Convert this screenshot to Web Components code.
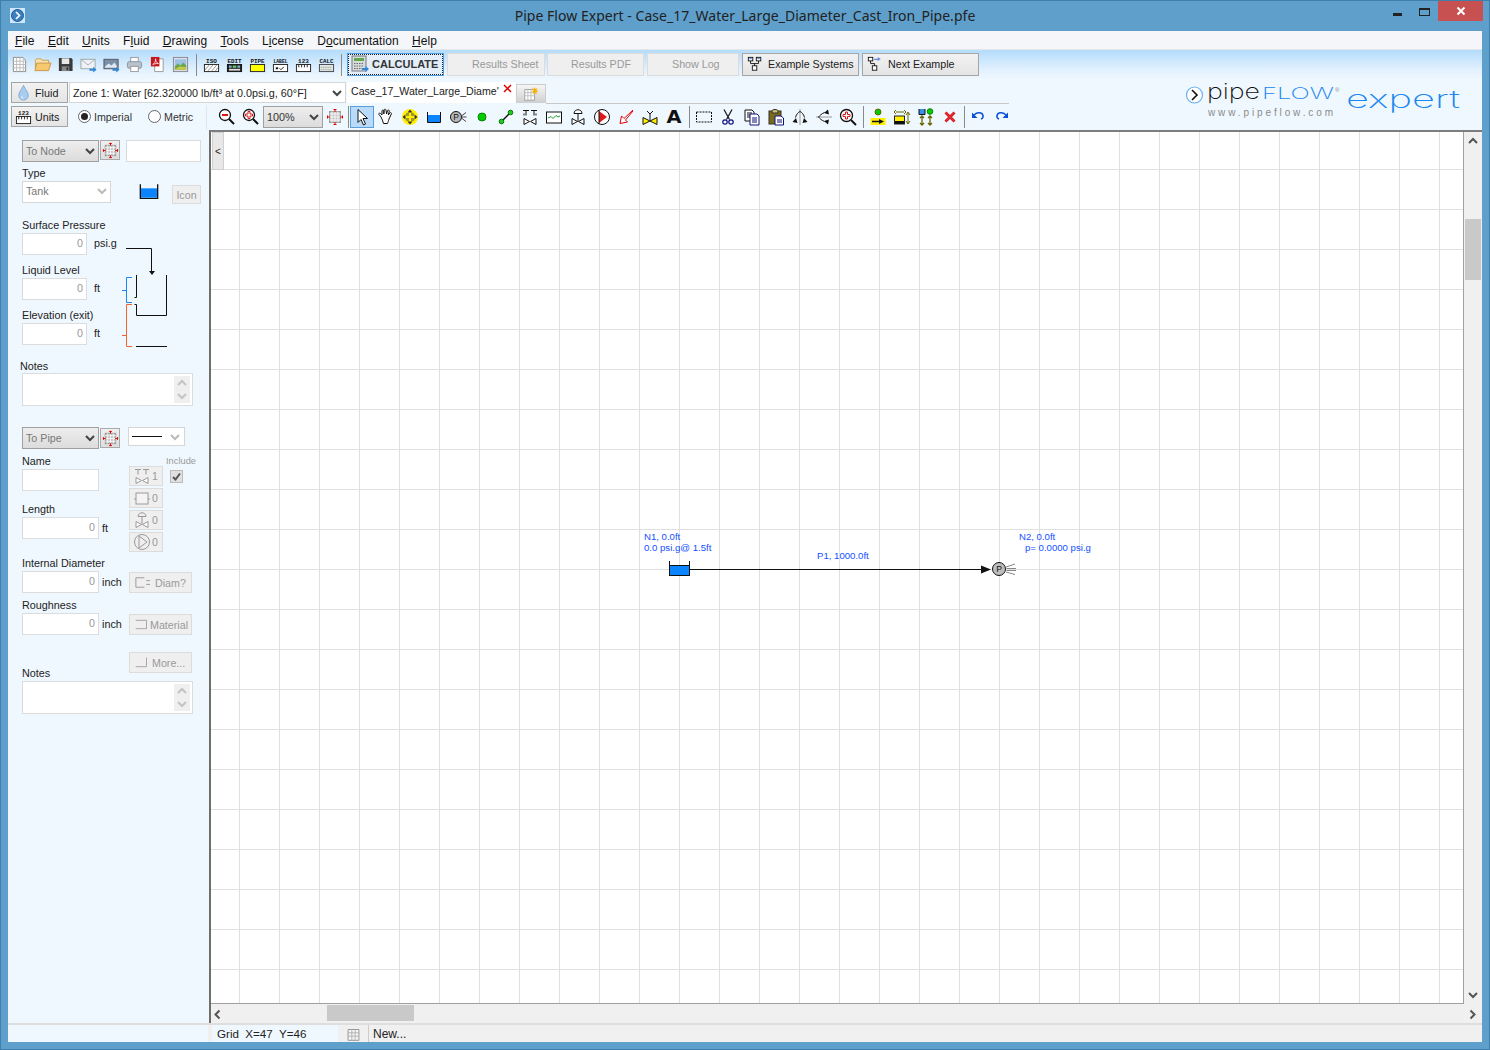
<!DOCTYPE html>
<html lang="en"><head><meta charset="utf-8"><title>Pipe Flow Expert</title>
<style>
html,body{margin:0;padding:0;background:#5f9fcb;font-family:"Liberation Sans",Arial,sans-serif;font-size:11px;color:#222}
</style></head><body>
<pf-app></pf-app>
<script>
const bow=(c)=>`<path d="M3 10.5l5.5 3-5.5 3zM15 10.5l-5.5 3 5.5 3z" fill="#fff" stroke="${c}"/>`;
const txt=(t)=>`<text x="9" y="7" text-anchor="middle" font-family="Liberation Mono,monospace" font-size="6.500" font-weight="700" fill="#111" textLength="${Math.min(15,t.length*3.8)}" lengthAdjust="spacingAndGlyphs">${t}</text>`;
const I={
new:`<path d="M2.5 1.5h10l3 3v12h-13z" fill="#fff" stroke="#888"/><path d="M2.5 5.5h13M2.5 9h13M2.5 12.5h13M6 1.5v15M9.5 1.5v15M13 1.5v15" stroke="#bbb" fill="none"/>`,
open:`<path d="M1.5 14V4.5l1-1.5h5l1 1.5h7v3" fill="#f9e2ad" stroke="#c9a05a"/><path d="M1 15.5l2-8h15l-2.5 8z" fill="#f6c970" stroke="#c9964a"/>`,
save:`<path d="M2 2h13l1.5 1.5V16H2z" fill="#3a3a3a"/><rect x="5" y="2.5" width="8" height="6" fill="#e8e8e8"/><rect x="5" y="11" width="8" height="5" fill="#8a8a8a"/><rect x="10" y="12" width="2" height="3" fill="#333"/>`,
email:`<rect x="1" y="3.5" width="15" height="10" fill="#eef2f6" stroke="#9aa"/><path d="M1 3.5l7.5 6 7.5-6" fill="none" stroke="#aab"/><path d="M10 13.500h4v-2l3.500 3-3.500 3v-2h-4z" fill="#2f87d8"/>`,
emailimg:`<rect x="1" y="3.5" width="15" height="10" fill="#7a8ea6" stroke="#556"/><path d="M2 11l4-3 3 2 3-3 3 4v1.5H2z" fill="#dde8f4"/><path d="M10 13.500h4v-2l3.500 3-3.500 3v-2h-4z" fill="#2f87d8"/>`,
print:`<rect x="5" y="1.5" width="8" height="5" fill="#fff" stroke="#999"/><rect x="1.5" y="6" width="15" height="7" rx="2" fill="#b8c2cc" stroke="#8a949e"/><rect x="5" y="11" width="8" height="5.5" fill="#fff" stroke="#999"/>`,
pdf:`<path d="M6 3h9v13.5H6z" fill="#fff" stroke="#999"/><rect x="2" y="1" width="9" height="10" fill="#c8161d"/><path d="M4 9c2-1 3-3 3-6 0 3 1 4 3 5-2 0-4 0-6 1z" fill="none" stroke="#fff" stroke-width=".8"/>`,
image:`<rect x="1.5" y="1.5" width="15" height="15" fill="#dde" stroke="#888"/><rect x="3" y="3.5" width="12" height="11" fill="#9cc2e6"/><path d="M3 11l3-3 3 2 3-3 3 3v4.500H3z" fill="#6aa84f"/><path d="M3 14l5-3 7 1v2.500H3z" fill="#c9c94a"/>`,
iso:`${txt('ISO')}<rect x="1.5" y="9" width="15" height="7.500" fill="#fff" stroke="#222"/><path d="M2 15l5-6M5 16l6-7M9 16l6-7M13 16l3-4" stroke="#777" stroke-width=".8"/>`,
edit:`${txt('EDIT')}<rect x="1.5" y="9" width="15" height="7.500" fill="#111" stroke="#111"/><rect x="3" y="10" width="3" height="2.500" fill="#8ac"/><rect x="7" y="10" width="4" height="2.500" fill="#6c6"/><rect x="12" y="10" width="3" height="2.500" fill="#8ac"/><rect x="3" y="13.500" width="12" height="2" fill="#ddd"/>`,
pipe:`${txt('PIPE')}<rect x="1.500" y="9" width="15" height="7.500" fill="#ffff00" stroke="#222"/>`,
labelic:`${txt('LABEL')}<rect x="1.500" y="9" width="15" height="7.500" fill="#fff" stroke="#222"/><path d="M8 13l1.500 1.500 3-3" fill="none" stroke="#111"/><rect x="4" y="12" width="2.500" height="2" fill="#111"/>`,
n123:`${txt('123')}<rect x="1.500" y="9" width="15" height="7.500" fill="#fff" stroke="#222"/><path d="M4 9v3M7 9v3M10 9v3M13 9v3" stroke="#222"/>`,
calc:`${txt('CALC')}<rect x="1.500" y="9" width="15" height="7.500" fill="#dfe9df" stroke="#445"/><path d="M3 12h12M3 14.500h12" stroke="#888" stroke-dasharray="1 1"/>`,
calculate:`<rect x="1" y="1" width="14" height="15" fill="#d8dcd8" stroke="#778"/><rect x="3" y="3" width="10" height="3" fill="#5fa84f"/><path d="M3 8.500h9M3 11h9M3 13.500h9" stroke="#667" stroke-dasharray="1.500 1"/><path d="M11 13h3.500v-2l3.500 3-3.500 3v-2H11z" fill="#2f87d8"/>`,
network:`<g fill="#fff" stroke="#111"><rect x="1.500" y="1.500" width="5" height="4"/><rect x="10.500" y="1.500" width="5" height="4"/><rect x="6" y="11" width="5" height="5"/></g><path d="M4 5.500v3h9v-3M8.500 8.500V11" fill="none" stroke="#111"/><rect x="2.500" y="2.500" width="3" height="1" fill="#2f87d8"/><rect x="11.500" y="2.500" width="3" height="1" fill="#2f87d8"/>`,
next:`<g fill="#fff" stroke="#111"><rect x="1.500" y="1.500" width="5" height="4"/><rect x="6" y="11" width="5" height="5"/></g><path d="M4 5.500v3h4.500V11" fill="none" stroke="#111"/><path d="M8 3h4V1l3.500 2.500L12 6V4.500H8z" fill="#6d8fd8"/>`,
target:`<rect x="3.500" y="3.500" width="11" height="11" fill="#c4c4c4" stroke="#999"/><path d="M6 3.500v11M9 3.500v11M12 3.500v11M3.500 6h11M3.500 9h11M3.500 12h11" stroke="#fff" stroke-width=".8"/><path d="M9 1v3M7.500 1.500h3M9 14v3M7.500 16.500h3M1 9h3M1.500 7.500v3M14 9h3M16.500 7.500v3" fill="none" stroke="#e00000"/>`,
zoomout:`<circle cx="7" cy="7" r="5.500" fill="#fff" stroke="#111" stroke-width="1.300"/><rect x="4" y="6" width="6" height="2" fill="#d81818"/><path d="M11 11l5 5" stroke="#111" stroke-width="2"/>`,
zoomin:`<circle cx="7" cy="7" r="5.500" fill="#fff" stroke="#111" stroke-width="1.300"/><path d="M6 3.500h2V6h2.500v2H8v2.500H6V8H3.500V6H6z" fill="#fff" stroke="#d81818"/><path d="M11 11l5 5" stroke="#111" stroke-width="2"/>`,
pointer:`<path d="M5 1.500v13l3-3 2.500 5.500 2-1L10 10.500h4.500z" fill="#fff" stroke="#111"/>`,
hand:`<path d="M4 9L2 6.500c-.8-1 .7-2 1.500-1L5 7V3c0-1.200 1.800-1.200 1.800 0v3l.4-4c.1-1.200 1.900-1 1.800.2L9.600 6l1-3.400c.3-1.100 2-.6 1.700.5L11.300 7l1.500-2c.7-1 2.200 0 1.500 1l-2.300 5c-.6 2-1 3-1.500 4.500H6.500C6 13 5 11 4 9z" fill="#fff" stroke="#111"/>`,
move:`<circle cx="9" cy="9" r="8" fill="#ffee00"/><path d="M9 1.500l2.500 3h-5zM9 16.500l2.500-3h-5zM1.500 9l3-2.500v5zM16.500 9l-3-2.500v5z" fill="#333"/><rect x="5" y="5" width="3" height="3" fill="#555" opacity=".55"/><rect x="10" y="5" width="3" height="3" fill="#555" opacity=".55"/><rect x="5" y="10" width="3" height="3" fill="#555" opacity=".55"/><rect x="10" y="10" width="3" height="3" fill="#555" opacity=".55"/>`,
tank:`<path d="M2.500 4v10.500h13V4" fill="none" stroke="#111"/><rect x="3" y="7" width="12" height="7" fill="#0a84ff"/>`,
exit:`<circle cx="7" cy="9" r="5.500" fill="#b8b8b8" stroke="#111"/><text x="7" y="12" text-anchor="middle" font-size="8.500" font-family="Liberation Sans,sans-serif" fill="#111">P</text><path d="M13 7.500l4-3M13 9h4.500M13 10.500l4 3" stroke="#444" fill="none"/>`,
node:`<circle cx="9" cy="9" r="4" fill="#0c0" stroke="#080"/>`,
pipeic:`<path d="M5 13L13 5" stroke="#111" stroke-width="1.500"/><circle cx="13.500" cy="4.500" r="2.300" fill="#2c2" stroke="#070"/><circle cx="4.500" cy="13.500" r="2.300" fill="#2c2" stroke="#070"/>`,
fitting:`<path d="M2 2.500h6M5 2.500v5M10 2.500h6M13 2.500v5M3 5.500v2M15 5.500v2" stroke="#111" fill="none"/>${bow('#111')}`,
graph:`<rect x="1.500" y="4" width="15" height="11" fill="#fff" stroke="#111"/><path d="M3 10l3-1.500 2 2 3-3 2 1.500 2-1" stroke="#1a9a3a" fill="none"/>`,
valve:`<path d="M5 5.500c0-5 8-5 8 0z" fill="#fff" stroke="#111"/><path d="M9 5.500v8" stroke="#111"/>${bow('#111')}`,
pump:`<circle cx="9" cy="9" r="7.500" fill="#fff" stroke="#111"/><path d="M6 3v12l8-6z" fill="#e01818"/><path d="M6 2v14" stroke="#111"/>`,
redarrow:`<path d="M16 2L7 10.500l-2.500-2.500L3 15.500l7.500-1.500L8.500 12 16 3" fill="#fff" stroke="#e00000"/>`,
yvalve:`<path d="M2 9.500l7 3.500-7 3.500zM16 9.500l-7 3.500 7 3.500z" fill="#ffee00" stroke="#111"/><path d="M6 3l3 3 3-3M9 6v6" stroke="#111" fill="none"/>`,
bigA:`<text x="9" y="15" text-anchor="middle" font-family="DejaVu Sans,sans-serif" font-weight="700" font-size="17" textLength="15" lengthAdjust="spacingAndGlyphs" fill="#111">A</text>`,
dash:`<rect x="1.500" y="4" width="15" height="10" fill="none" stroke="#111" stroke-dasharray="2 1"/>`,
cut:`<path d="M5 1.500l5.500 10M13 1.500l-5.500 10" stroke="#111" stroke-width="1.200" fill="none"/><circle cx="6" cy="14" r="2.200" fill="none" stroke="#10107a" stroke-width="1.200"/><circle cx="12" cy="14" r="2.200" fill="none" stroke="#10107a" stroke-width="1.200"/>`,
copy:`<path d="M2 2h7l2 2v9H2z" fill="#fff" stroke="#111"/><path d="M4 5h5M4 7h5M4 9h5" stroke="#111"/><path d="M7 6h7l2 2v9H7z" fill="#fff" stroke="#10107a"/><path d="M9 10h5M9 12h5M9 14h5" stroke="#10107a"/>`,
paste:`<rect x="2" y="3" width="12" height="13" fill="#7a6a1e" stroke="#332"/><path d="M5 3c0-2 6-2 6 0v2H5z" fill="#c8c078" stroke="#332"/><path d="M8 8h6l2.500 2v7H8z" fill="#fff" stroke="#10107a"/><path d="M10 12h5M10 14h5" stroke="#10107a"/>`,
flipv:`<path d="M9 1v16" stroke="#999"/><path d="M1.500 14l3.500-4 1.500 5zM16.500 14l-3.500-4-1.500 5z" fill="#111"/><path d="M4.500 9.500C5.500 6 7 4.500 9 3.500c2 1 3.500 2.500 4.500 6" fill="none" stroke="#111"/>`,
fliph:`<path d="M1 9h16" stroke="#999"/><path d="M13 1.500l-4 3.500 5 1.500zM13 16.500l-4-3.500 5-1.500z" fill="#111"/><path d="M9.500 4.500C6 6 5 7.500 3.500 9c1.500 1.500 2.500 3 6 4.500" fill="none" stroke="#111"/>`,
zoomfit:`<circle cx="7.500" cy="7.500" r="6" fill="#fff" stroke="#111" stroke-width="1.300"/><path d="M6.500 4h2v2.500H11v2H8.500V11h-2V8.500H4v-2h2.500z" fill="#fff" stroke="#d81818"/><path d="M12 12l5 5" stroke="#111" stroke-width="2"/>`,
addnode:`<circle cx="9" cy="4" r="3" fill="#0c0" stroke="#660"/><rect x="1.500" y="10" width="15" height="7" fill="#ffee00"/><path d="M3 13.500h8" stroke="#111" stroke-width="1.500"/><path d="M10 11l5 2.500-5 2.500z" fill="#111"/>`,
align:`<path d="M3 4h8M3 2l-2 2 2 2M11 2l2 2-2 2" stroke="#660" fill="none"/><rect x="1.500" y="8" width="10" height="8" fill="#ffee00" stroke="#222"/><rect x="2" y="13" width="9" height="3" fill="#111"/><path d="M15 5v11M13 7l2-3 2 3M13 13l2 3 2-3" stroke="#660" fill="none"/>`,
alignall:`<path d="M2 1v5.500h6V1" fill="#3a8ee6" stroke="#111"/><circle cx="13" cy="3.500" r="2.800" fill="#0c0" stroke="#080"/><path d="M5 8v9M3 10l2-2 2 2M3 15l2 2 2-2M13 8v9M11 10l2-2 2 2M11 15l2 2 2-2" stroke="#660" fill="none" stroke-width="1.300"/>`,
del:`<path d="M4.500 4.500l9 9M13.500 4.500l-9 9" stroke="#d81818" stroke-width="2.800"/><path d="M4.500 4.500l9 9M13.500 4.500l-9 9" stroke="#f58" stroke-width=".7" opacity=".6"/>`,
undo:`<path d="M5 7c3-3 8-3 9 .5.4 2-.6 3-2 3.500" fill="none" stroke="#0a50d8" stroke-width="1.500"/><path d="M3 4.500v5.500h5.500z" fill="#0a50d8"/>`,
redo:`<path d="M13 7c-3-3-8-3-9 .5-.4 2 .6 3 2 3.500" fill="none" stroke="#0a50d8" stroke-width="1.500"/><path d="M15 4.500v5.500H9.500z" fill="#0a50d8"/>`,
newtab:`<path d="M2 4h11v12H2z" fill="#fff" stroke="#999"/><path d="M2 7.500h11M2 11h11M5.500 4v12M9 4v12" stroke="#bbb"/><path d="M13 1l1 2.500 2.500-1-1.500 2.500 2.500 1-2.500 1 .5 2.500-2-1.500-2 1.500.5-2.500-2.500-1 2.500-1L9.500 2.500l2.500 1z" fill="#f5b400"/>`,
drop:`<path d="M9 1.500C7 6 4 9 4 12a5 5 0 0 0 10 0c0-3-3-6-5-10.500z" fill="#a8cdf0" stroke="#7ea8cc"/><path d="M7 13c0 1.500 1 2.500 2 2.500" fill="none" stroke="#fff"/>`,
ruler:`${txt('123')}<rect x="1.500" y="9" width="15" height="7.500" fill="#fff" stroke="#222"/><path d="M4 9v3M7 9v3M10 9v3M13 9v3" stroke="#222"/>`,
gfit:`<path d="M2 2.500h6M5 2.500v5M10 2.500h6M13 2.500v5" stroke="#999" fill="none"/>${bow('#999')}`,
grect:`<path d="M1 10h2M15 10h2" stroke="#999"/><rect x="3" y="4" width="12" height="11" fill="#f4f4f4" stroke="#999"/>`,
gvalve:`<path d="M5 5.500c0-5 8-5 8 0z" fill="none" stroke="#999"/><path d="M9 5.500v8" stroke="#999"/>${bow('#999')}`,
gpump:`<circle cx="9" cy="9" r="7.500" fill="none" stroke="#999"/><path d="M6 3v12l8-6z" fill="none" stroke="#999"/>`,
gdiam:`<path d="M11 4H2v10h9M13 7h4M13 11h4" stroke="#999" fill="none"/>`,
gmat:`<path d="M2 4h13v10H2" stroke="#999" fill="none"/>`,
gmore:`<path d="M15 3v11H2" stroke="#999" fill="none"/>`,
sheet:`<path d="M2.500 3h13v13h-13z" fill="#f4f4f4" stroke="#888"/><path d="M2.500 7h13M2.500 11h13M7 3v13M11 3v13" stroke="#aaa"/>`
};
class Base extends HTMLElement{
  constructor(){super();this.attachShadow({mode:'open'})}
  connectedCallback(){this.shadowRoot.innerHTML=`<style>:host{box-sizing:border-box}*{box-sizing:border-box}${this.css()}</style>${this.html()}`}
  css(){return''} html(){return'<slot></slot>'}
  a(n,d){return this.hasAttribute(n)?this.getAttribute(n):d}
}
const def=(n,c)=>customElements.define(n,c);
def('pf-icon',class extends Base{
  css(){const s=this.a('size',18);return`:host{display:inline-flex;width:${s}px;height:${s}px;flex:none}svg{display:block;overflow:visible}`}
  html(){const s=this.a('size',18);return`<svg width="${s}" height="${s}" viewBox="0 0 18 18">${I[this.a('name')]||''}</svg>`}
});
def('pf-tool',class extends Base{
  css(){const w=this.a('w',24);return`:host{display:flex;align-items:center;justify-content:center;width:${w}px;height:24px;flex:none}`+(this.hasAttribute('active')?`:host{background:#b9dbf9;outline:1px solid #5a9fdc;outline-offset:-1px;height:22px;margin-top:1px}`:'')}
  html(){return`<pf-icon name="${this.a('name')}" size="${this.a('size',18)}"></pf-icon>`}
});
def('pf-sep',class extends Base{
  css(){return`:host{display:flex;justify-content:center;align-items:center;width:${this.a('w',6)}px;height:24px;flex:none}i{display:block;width:1px;height:22px;background:#8a8a8a}`}
  html(){return'<i></i>'}
});
def('pf-btn',class extends Base{
  css(){
    const d=this.hasAttribute('disabled');const p=this.a('pad',5);
    return`:host{display:inline-flex;align-items:center;gap:${this.a('gap',4)}px;justify-content:${this.a('justify','flex-start')};width:${this.a('w','auto')}${this.hasAttribute('w')?'px':''};height:${this.a('h',23)}px;padding:0 ${p}px ${this.a('pb',0)}px ${this.a('pl',p)}px;flex:none;margin-top:${this.a('mt',0)}px;
    background:${d?'#efefef':'linear-gradient(#f2f2f2,#e4e4e4)'};border:1px solid ${d?'#dcdcdc':'#a5a5a5'};color:${d?'#999':'#222'};font-size:${this.a('fs','10.700px')};white-space:nowrap;overflow:hidden}`}
});
def('pf-chev',class extends Base{
  css(){return`:host{display:inline-flex;flex:none}`}
  html(){const c=this.a('color','#444');const d={down:'M1 1.500l4 4 4-4',up:'M1 5.500l4-4 4 4',left:'M5.500 1l-4 4 4 4',right:'M1.500 1l4 4-4 4'}[this.a('dir','down')];
  return`<svg width="10" height="10" viewBox="0 0 10 7" style="overflow:visible"><path d="${d}" fill="none" stroke="${c}" stroke-width="2"/></svg>`}
});
def('pf-select',class extends Base{
  css(){const g=this.hasAttribute('gray'),dis=this.hasAttribute('disabled'),dk=this.hasAttribute('dark');
   return`:host{display:inline-flex;align-items:center;justify-content:space-between;flex:none;width:${this.a('w',80)}px;height:${this.a('h',22)}px;padding:0 ${this.a('pr',5)}px 0 3px;border:1px solid ${g?'#a0a0a0':'#d6d6d6'};background:${g?'linear-gradient(#eee,#dcdcdc)':'#fff'};color:${dk?'#333':(dis||g?'#777':'#222')};font-size:${this.a('fs','10.700px')};white-space:nowrap;overflow:hidden;margin-top:${this.a('mt',0)}px}
   pf-chev{margin-left:3px}`}
  html(){const dis=this.hasAttribute('disabled');return`<span><slot></slot></span><pf-chev color="${dis?'#bbb':'#444'}"></pf-chev>`}
});
def('pf-input',class extends Base{
  css(){return`:host{display:flex;align-items:center;justify-content:flex-end;flex:none;width:${this.a('w',65)}px;height:22px;padding:0 3px 2px 0;background:#fff;border:1px solid #dcdcdc;color:#999;font-size:10.700px}`}
  html(){return this.a('value','')}
});
def('pf-textarea',class extends Base{
  css(){return`:host{display:flex;justify-content:flex-end;width:171px;height:33px;padding:2px;background:#fff;border:1px solid #dcdcdc;flex:none}
  div{width:16px;background:#efefef;display:flex;flex-direction:column;justify-content:space-around;align-items:center}`}
  html(){return`<div><pf-chev dir="up" color="#c4c4c4"></pf-chev><pf-chev color="#c4c4c4"></pf-chev></div>`}
});
def('pf-titlebar',class extends Base{
  css(){return`:host{display:flex;align-items:flex-start;height:31px;position:relative;color:#222;font-family:"Noto Sans","Open Sans",sans-serif}
  .ic{margin:7px 0 0 9px;width:15px;height:15px}
  .t{position:absolute;left:0;right:0;top:5px;text-align:center;font-size:14px;line-height:20px;letter-spacing:.03px;color:#222}
  .c{margin-left:auto;display:flex;align-items:flex-start;margin-right:6px}
  .min{width:9px;height:3px;background:#222;margin:12px 17px 0 0}
  .max{width:11px;height:8px;border:1px solid #222;border-top-width:2px;margin:7px 8px 0 0}
  .x{width:45px;height:20px;background:#c75050;display:flex;align-items:center;justify-content:center}`}
  html(){return`<svg class="ic" viewBox="0 0 15 15"><rect width="15" height="15" fill="#cfe6ff"/><circle cx="7.500" cy="7.500" r="6" fill="#3b7fbe" stroke="#1d5a94"/><path d="M6 4l3.500 3.500L6 11" fill="none" stroke="#fff" stroke-width="1.600"/></svg>
  <div class="t">Pipe Flow Expert - Case_17_Water_Large_Diameter_Cast_Iron_Pipe.pfe</div>
  <div class="c"><div class="min"></div><div class="max"></div><div class="x"><svg width="10" height="10" viewBox="0 0 10 10"><path d="M1.500 1.500l7 7M8.500 1.500l-7 7" stroke="#fff" stroke-width="2"/></svg></div></div>`}
});
def('pf-menubar',class extends Base{
  css(){return`:host{display:flex;align-items:center;gap:13.300px;height:19px;padding:1px 0 0 7px;background:#f4f6f9;font-size:12px;color:#111;border-bottom:1px solid #e4e6e8;letter-spacing:.06px}
  span{white-space:nowrap}`}
  html(){return['<u>F</u>ile','<u>E</u>dit','<u>U</u>nits','F<u>l</u>uid','<u>D</u>rawing','<u>T</u>ools','L<u>i</u>cense','D<u>o</u>cumentation','<u>H</u>elp'].map(m=>`<span>${m}</span>`).join('')}
});
def('pf-logo',class extends Base{
  css(){return`:host{display:block;flex:none;width:280px;height:42px;margin:-4px 0 0 176px}svg{display:block}`}
  html(){return`<svg width="280" height="42" viewBox="0 -6 280 42">
  <circle cx="9.500" cy="11" r="8" fill="#fff" stroke="#6ab0f0" stroke-width="1.200"/><path d="M7 6l5 5-5 5" fill="none" stroke="#111" stroke-width="1.600"/>
  <text x="22" y="15" font-family="Inter,Lato,sans-serif" font-weight="200" font-size="22" textLength="53" lengthAdjust="spacingAndGlyphs" fill="#111">pipe</text>
  <text x="77" y="15" font-family="Inter,Lato,sans-serif" font-weight="200" font-size="16" textLength="72" lengthAdjust="spacingAndGlyphs" fill="#1c87ef">FLOW</text>
  <text x="150" y="8" font-family="Liberation Sans,sans-serif" font-size="6" fill="#888">®</text>
  <text x="161" y="24" font-family="Inter,Lato,sans-serif" font-weight="200" font-size="24" textLength="114" lengthAdjust="spacingAndGlyphs" fill="#1c87ef">expert</text>
  <text x="23" y="32" font-family="Liberation Sans,sans-serif" font-size="10" textLength="125" fill="#8a8a8a">www.pipeflow.com</text></svg>`}
});
def('pf-toolbars',class extends Base{
  css(){return`:host{display:block;height:80px;background:linear-gradient(#b4dcfc 0,#e2f1fe 20px,#f0f8ff 30px);flex:none}
  .row{display:flex;align-items:center}
  .r1{height:23px;margin-top:3px}
  .lower{display:flex;margin-top:6px}
  .left{width:1001px;flex:none}
  .r2{height:21px;align-items:stretch;padding-left:3px}
  .r3{height:25px;margin-top:2px;padding-left:3px;align-items:flex-start}
  .radio{display:flex;align-items:center;gap:3px;width:70px;height:25px;font-size:10.700px;margin-top:-1px;color:#333;flex:none}
  .radios{display:flex;margin-left:10px;width:129px;flex:none;border-right:1px solid #dfe6ec;height:25px}
  .dot{width:13px;height:13px;border-radius:50%;border:1px solid #666;background:#fff;display:flex;align-items:center;justify-content:center;flex:none}
  .dot i{display:block;width:7px;height:7px;border-radius:50%;background:#222}
  .tab{width:169px;background:#fff;font-size:10.600px;padding:1px 0 0 4px;display:flex;justify-content:space-between;flex:none;margin-left:1px}
  .tab span{white-space:nowrap;display:block;margin-top:2px}
  .tab svg{margin:1px 4px 0 0;flex:none}
  .nt{width:30px;height:19px;margin-top:2px;border:1px solid #ccc;border-bottom:0;background:linear-gradient(#f6f6f6,#cfcfcf);display:flex;align-items:center;justify-content:center;flex:none}
  .line{flex:1;border-bottom:1px solid #c8c8c8;margin-bottom:-1px;align-self:stretch}
  .start{margin-left:8px}
  .calcb{display:flex;align-items:center;gap:3px;width:97px;height:23px;border:1px solid #4d9de0;background:#e3eef8;padding:0 3px 1px;margin-left:3px;flex:none;font-weight:700;font-size:11px;color:#333;outline:1px dotted #222;outline-offset:-2px;white-space:nowrap;overflow:hidden}`}
  html(){
   const t=(n,w)=>`<pf-tool name="${n}"${w?` w="${w}" size="17"`:''}></pf-tool>`;
   return`<div class="row r1">
    ${['new','open','save','email','emailimg','print','pdf','image'].map(n=>t(n,23)).join('')}<pf-sep w="8"></pf-sep>
    ${['iso','edit','pipe','labelic','n123','calc'].map(n=>t(n,23)).join('')}<pf-sep></pf-sep>
    <div class="calcb"><pf-icon name="calculate"></pf-icon>CALCULATE</div>
    <pf-btn style="margin-left:3px" disabled w="98" pl="24" pb="2">Results Sheet</pf-btn>
    <pf-btn style="margin-left:2px" disabled w="97" pl="23" pb="2">Results PDF</pf-btn>
    <pf-btn style="margin-left:3px" disabled w="92" pl="24" pb="2">Show Log</pf-btn>
    <pf-btn style="margin-left:3px" w="117" pad="4" gap="5" pb="1"><pf-icon name="network" size="16"></pf-icon>Example Systems</pf-btn>
    <pf-btn style="margin-left:3px" w="117" pad="4" gap="5" pb="1"><pf-icon name="next" size="16"></pf-icon>Next Example</pf-btn>
   </div>
   <div class="lower"><div class="left">
    <div class="row r2">
     <pf-btn w="57" h="21" pad="3" gap="3" fs="10.800px"><pf-icon name="drop" size="17"></pf-icon>Fluid</pf-btn>
     <pf-select style="margin-left:1px" w="277" h="21" fs="10.800px" pr="3">Zone 1: Water [62.320000 lb/ft³ at 0.0psi.g, 60°F]</pf-select>
     <div class="tab"><span>Case_17_Water_Large_Diame'</span><svg width="9" height="9" viewBox="0 0 9 9"><path d="M1 1l7 7M8 1L1 8" stroke="#e00000" stroke-width="1.500"/></svg></div>
     <div class="nt"><pf-icon name="newtab" size="16"></pf-icon></div>
     <div class="line"></div>
    </div>
    <div class="row r3">
     <pf-btn w="57" h="21" mt="1" pad="3" gap="3" fs="10.700px"><pf-icon name="ruler" size="17"></pf-icon>Units</pf-btn>
     <div class="radios"><label class="radio"><span class="dot"><i></i></span>Imperial</label><label class="radio"><span class="dot"></span>Metric</label></div>
     <span class="start"></span>${t('zoomout')}${t('zoomin')}
     <pf-select gray dark w="60" h="22" mt="1" fs="10.800px" pr="3">100%</pf-select>${t('target')}<pf-sep w="3"></pf-sep>
     ${t('pointer" active="')}${['hand','move','tank','exit','node','pipeic','fitting','graph','valve','pump','redarrow','yvalve','bigA'].map(n=>t(n)).join('')}<pf-sep></pf-sep>
     ${['dash','cut','copy','paste','flipv','fliph','zoomfit'].map(n=>t(n)).join('')}<pf-sep></pf-sep>
     ${['addnode','align','alignall','del'].map(n=>t(n)).join('')}<pf-sep w="4"></pf-sep>${t('undo')}${t('redo')}
    </div>
   </div><pf-logo></pf-logo></div>`}
});
const lblCss=`.lb{display:block;height:14px;line-height:14px;font-size:10.800px;color:#222;white-space:nowrap}.u{font-size:10.800px;color:#222}`;
def('pf-tbtn',class extends Base{
  css(){return`:host{display:flex;align-items:center;justify-content:center;width:20px;height:20px;border:1px solid #aaa;background:linear-gradient(#efefef,#dedede);flex:none;margin:${this.a('m','0')}}`}
  html(){return`<pf-icon name="target" size="17"></pf-icon>`}
});
def('pf-node-form',class extends Base{
  css(){return lblCss+`:host{display:block;height:280px}
  .r{display:flex;align-items:flex-start}
  .f{display:flex;align-items:center;gap:7px;height:22px}
  .f .u{padding-bottom:2px}
  .d{flex:none;display:block}
  .b{stroke:#1e88f0}.o{stroke:#f4652e}.k{stroke:#111}`}
  html(){const F=(l,u)=>`<span class="lb" style="margin-bottom:1px">${l}</span><div class="f"><pf-input w="65" value="0"></pf-input><span class="u">${u}</span></div>`;
  return`<div class="r"><pf-select gray w="77" pr="3">To Node</pf-select><pf-tbtn m="0 0 0 1px"></pf-tbtn><pf-input w="75" style="margin-left:6px"></pf-input></div>
  <span class="lb" style="margin-top:4px;margin-bottom:1px">Type</span>
  <div class="r"><pf-select w="89" disabled pr="3" style="padding-bottom:2px">Tank</pf-select><pf-icon name="tank" size="24" style="margin:-2px 0 0 26px"></pf-icon><pf-btn disabled w="29" h="19" mt="4" pad="0" justify="center" style="margin-left:11px;">Icon</pf-btn></div>
  <div class="r" style="margin-top:14px"><div class="col" style="width:100px">${F('Surface Pressure','psi.g')}<div style="height:8px"></div>${F('Liquid Level','ft')}<div style="height:8px"></div>${F('Elevation (exit)','ft')}</div>
  <svg class="d" style="margin-top:29px" width="48" height="103" viewBox="0 0 48 103" fill="none">
   <path class="k" d="M4 1.500H29.500V25"/><path d="M27 24h6l-3 4z" fill="#111"/>
   <path class="k" d="M14.500 28V50.500H12.500"/><path class="k" d="M12.500 57.500H14.500V68.500H44.500V28"/>
   <path class="k" d="M14 99.500H45"/>
   <path class="b" d="M10 30.500H4.500V55.500H10M0 43.500H4.500"/>
   <path class="o" d="M10 57.500H4.500V99.500H10M0 88.500H4.500"/></svg></div>
  <span class="lb" style="margin:9px 0 0 -2px">Notes</span>
  <pf-textarea></pf-textarea>`}
});
def('pf-pipe-form',class extends Base{
  css(){return lblCss+`:host{display:block}
  .r{display:flex;align-items:flex-start}
  .col{display:flex;flex-direction:column}
  .f{display:flex;align-items:center;height:22px}
  .f .u{margin-left:3px;width:27px;flex:none}
  .inc{font-size:9.300px;color:#999;height:14px;line-height:14px;white-space:nowrap}
  .cb{width:13px;height:13px;margin:2px 0 0 4px;background:#e0e0e0;border:1px solid #bbb;display:flex;align-items:center;justify-content:center}`}
  html(){
  const S=(n,t)=>`<pf-btn disabled w="34" h="20" pad="1" pl="3" gap="1" fs="10.500px"><pf-icon name="${n}" size="18"></pf-icon>${t}</pf-btn>`;
  return`<div class="r"><pf-select gray w="77" pr="3">To Pipe</pf-select><pf-tbtn m="1px 0 0 1px"></pf-tbtn>
   <pf-select w="57" h="19" style="margin-left:8px" pr="4" disabled><svg width="32" height="4" style="display:block"><path d="M0 1.500H30" stroke="#111"/></svg></pf-select></div>
  <div class="r" style="margin-top:5px">
   <div class="col" style="width:107px;flex:none">
    <span class="lb" style="margin-bottom:1px">Name</span><pf-input w="77"></pf-input>
    <span class="lb" style="margin-top:11px;margin-bottom:1px">Length</span><div class="f"><pf-input w="77" value="0"></pf-input><span class="u">ft</span></div>
   </div>
   <div class="col" style="margin-top:12px;gap:2px;width:37px;flex:none">${S('gfit','1')}${S('grect','0')}${S('gvalve','0')}${S('gpump','0')}</div>
   <div class="col"><span class="inc">Include</span><div class="cb"><svg width="9" height="9" viewBox="0 0 9 9"><path d="M1 5l2.500 2.500L8 1.500" fill="none" stroke="#555" stroke-width="2"/></svg></div></div>
  </div>
  <span class="lb" style="margin-top:4px;margin-bottom:1px">Internal Diameter</span>
  <div class="r"><div class="f"><pf-input w="77" value="0"></pf-input><span class="u">inch</span></div><pf-btn disabled w="63" h="21" mt="1" pad="1" pl="4" gap="4"><pf-icon name="gdiam" size="17"></pf-icon>Diam?</pf-btn></div>
  <span class="lb" style="margin-top:5px;margin-bottom:1px">Roughness</span>
  <div class="r"><div class="f"><pf-input w="77" value="0"></pf-input><span class="u">inch</span></div><pf-btn disabled w="63" h="21" mt="1" pad="1" pl="4" gap="1"><pf-icon name="gmat" size="15"></pf-icon>Material</pf-btn></div>
  <div class="r" style="margin-top:17px;height:28px;justify-content:space-between;width:170px"><span class="lb" style="align-self:flex-end">Notes</span><pf-btn disabled w="63" h="21" pad="1" pl="4" gap="3"><pf-icon name="gmore" size="15"></pf-icon>More...</pf-btn></div>
  <div style="height:1px"></div><pf-textarea></pf-textarea>`}
});
def('pf-panel',class extends Base{
  css(){return`:host{display:block;width:201px;height:893px;flex:none;background:#f0f8ff;padding:10px 0 0 14px}pf-pipe-form{margin-top:7px}`}
  html(){return`<pf-node-form></pf-node-form><pf-pipe-form></pf-pipe-form>`}
});
def('pf-scrollbar',class extends Base{
  css(){const h=this.hasAttribute('h');return`:host{display:flex;flex-direction:${h?'row':'column'};background:#f0f0f0;${h?'height:19px;padding:1px 0 2px':'width:18px;padding:0 1px'}}
  .a{flex:none;display:flex;align-items:center;justify-content:center;${h?'width:16px':'height:18px'}}
  .tr{flex:1;display:flex;flex-direction:${h?'row':'column'};${h?'padding-left:100px':'padding-top:69px'}}
  .th{background:#c9c9c9;${h?'width:87px;height:100%':'height:61px;width:100%'}}`}
  html(){const h=this.hasAttribute('h');return`<div class="a"><pf-chev dir="${h?'left':'up'}" color="#555"></pf-chev></div><div class="tr"><div class="th"></div></div><div class="a"><pf-chev dir="${h?'right':'down'}" color="#555"></pf-chev></div>`}
});
def('pf-tag',class extends Base{
  css(){return`:host{position:absolute;left:${this.a('x')}px;top:${this.a('y')}px;font-size:9.600px;line-height:12px;color:#1450ff;white-space:nowrap}`}
});
def('pf-canvas',class extends Base{
  css(){return`:host{display:block;position:relative;background:#fff;overflow:hidden;border-right:1px solid #a0a0a0;border-bottom:1px solid #a0a0a0}
  .g{position:absolute;inset:0;background-image:linear-gradient(to right,#e0e0e0 1px,transparent 1px),linear-gradient(to bottom,#e0e0e0 1px,transparent 1px);background-size:40px 40px;background-position:28px 37px}
  svg{position:absolute;left:0;top:0}
  .col{position:absolute;left:1px;top:0;width:12px;height:38px;background:#e8e8e8;border:1px solid #d0d0d0;display:flex;align-items:flex-start;justify-content:center;font-size:10px;padding-top:14px;line-height:10px;color:#222}`}
  html(){return`<div class="g"></div><div class="col">&lt;</div>
  <svg width="1252" height="871" fill="none">
   <path d="M479 437.500H772" stroke="#111" stroke-width="1.200"/><path d="M770 433.500l10 4-10 4z" fill="#111"/>
   <rect x="458.500" y="433.500" width="20" height="10" fill="#0a84ff" stroke="#111"/><path d="M458.500 429v5M478.500 429v5" stroke="#111"/>
   <circle cx="788" cy="437" r="6.500" fill="#bdbdbd" stroke="#111"/><text x="788" y="440" text-anchor="middle" font-family="Liberation Sans,sans-serif" font-size="8.500" fill="#111">P</text>
   <path d="M795 435l9-3M795.500 436.500h9.500M795.500 438.500h9.500M795 440l9 2.500" stroke="#888"/>
  </svg>
  <pf-tag x="433" y="399">N1, 0.0ft</pf-tag><pf-tag x="433" y="410">0.0 psi.g@ 1.5ft</pf-tag>
  <pf-tag x="606" y="418">P1, 1000.0ft</pf-tag>
  <pf-tag x="808" y="399">N2, 0.0ft</pf-tag><pf-tag x="814" y="410">p= 0.0000 psi.g</pf-tag>`}
});
def('pf-status',class extends Base{
  css(){return`:host{display:flex;height:19px;background:#f0f0f0;border-top:2px solid #dedede;font-size:11.600px;color:#222;flex:none}
  .a{width:200px;background:#f0f8ff;flex:none}
  .b{width:126px;margin-left:4px;background:#f0f8ff;padding:2px 0 0 5px;flex:none;white-space:pre}
  .c{width:31px;border-right:1px solid #ccc;display:flex;justify-content:center;flex:none;align-items:flex-end}
  .d{padding:2px 0 0 4px;font-size:12px}`}
  html(){return`<div class="a"></div><div class="b">Grid  X=47  Y=46</div><div class="c"><pf-icon name="sheet" size="15"></pf-icon></div><div class="d">New...</div>`}
});
def('pf-app',class extends Base{
  css(){return`:host{display:flex;flex-direction:column;width:1490px;height:1050px;background:#5f9fcb;border:1px solid #3f7fae;overflow:hidden}
  .client{margin:-1px 7px 7px;height:1011px;display:flex;flex-direction:column;background:#fff;flex:none}
  .main{display:flex;height:893px;flex:none}
  .work{flex:1;display:grid;grid-template-columns:1fr 18px;grid-template-rows:1fr 19px;border-top:2px solid #7d7d7d;border-left:2px solid #6e6e6e;min-width:0;background:#f0f0f0}
  pf-scrollbar[h]{grid-column:1/3}`}
  html(){return`<pf-titlebar></pf-titlebar><div class="client"><pf-menubar></pf-menubar><pf-toolbars></pf-toolbars>
  <div class="main"><pf-panel></pf-panel><div class="work"><pf-canvas></pf-canvas><pf-scrollbar></pf-scrollbar><pf-scrollbar h></pf-scrollbar></div></div>
  <pf-status></pf-status></div>`}
});
</script></body></html>
